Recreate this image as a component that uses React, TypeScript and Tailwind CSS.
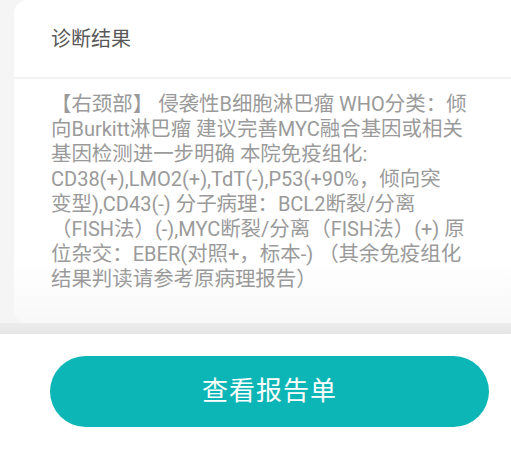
const lines = [
  '【右颈部】 侵袭性B细胞淋巴瘤 WHO分类：倾',
  '向Burkitt淋巴瘤 建议完善MYC融合基因或相关',
  '基因检测进一步明确 本院免疫组化:',
  'CD38(+),LMO2(+),TdT(-),P53(+90%，倾向突',
  '变型),CD43(-) 分子病理：BCL2断裂/分离',
  '（FISH法）(-),MYC断裂/分离（FISH法）(+) 原',
  '位杂交：EBER(对照+，标本-) （其余免疫组化',
  '结果判读请参考原病理报告）',
]

// CJK runs render a touch wider than the latin ones in the original
function Line({ text }: { text: string }) {
  const parts = text.split(/([\u3000-\u9fff\uff00-\uffef]+)/)
  return (
    <div className="whitespace-nowrap">
      {parts.map((part, i) =>
        /[\u3000-\u9fff\uff00-\uffef]/.test(part) ? (
          <span key={i} className="text-[20.45px]">
            {part}
          </span>
        ) : (
          <span key={i}>{part}</span>
        )
      )}
    </div>
  )
}

export default function App() {
  return (
    <div
      className="w-[511px] h-[449px] overflow-hidden bg-white"
      style={{ fontFamily: "Roboto, 'Noto Sans CJK SC', sans-serif" }}
    >
      {/* Diagnosis card */}
      <div className="bg-[#f5f5f5] pl-[14px]">
        <div className="h-[323px] rounded-l-[14px] bg-gradient-to-b from-white from-80% to-[#f8f8f8] -mr-4">
          <div className="h-[77px] flex items-center pl-[37px] text-[20px] text-[#585858]">
            诊断结果
          </div>
          <div className="h-[2px] bg-[#f3f3f3]" />
          <div className="pt-[13px] pl-[37px] text-[20px] leading-[25px] text-[#9a9a9a]">
            {lines.map((line, i) => (
              <Line key={i} text={line} />
            ))}
          </div>
        </div>
      </div>
      <div className="h-[11px] bg-gradient-to-b from-[#ececec] to-[#e6e6e6]" />

      {/* Action */}
      <div className="px-[50px] pt-[22px] pr-[22px]">
        <button className="w-full h-[71px] rounded-full bg-[#0db6b6] text-white text-[26px] tracking-[1px]">
          查看报告单
        </button>
      </div>
    </div>
  )
}
